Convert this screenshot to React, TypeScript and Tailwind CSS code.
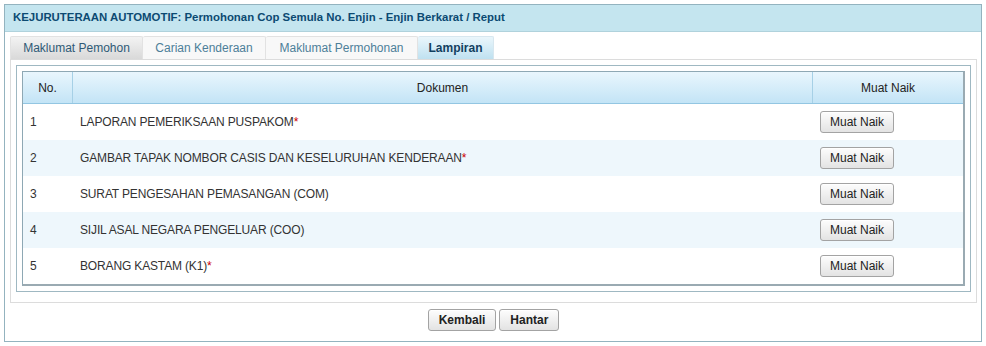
import React from "react";

const rows = [
  { no: "1", doc: "LAPORAN PEMERIKSAAN PUSPAKOM", req: true },
  { no: "2", doc: "GAMBAR TAPAK NOMBOR CASIS DAN KESELURUHAN KENDERAAN", req: true },
  { no: "3", doc: "SURAT PENGESAHAN PEMASANGAN (COM)", req: false },
  { no: "4", doc: "SIJIL ASAL NEGARA PENGELUAR (COO)", req: false },
  { no: "5", doc: "BORANG KASTAM (K1)", req: true },
];

function SmallButton({ children, bold }: { children: React.ReactNode; bold?: boolean }) {
  return (
    <button
      className={
        "h-[22px] rounded-[3px] border border-[#a3a3a3] bg-gradient-to-b from-[#fdfdfd] to-[#e3e3e3] text-[12px] leading-none text-[#222] shadow-[inset_0_1px_0_#fff] " +
        (bold ? "font-bold px-[10px]" : "px-[9px]")
      }
    >
      {children}
    </button>
  );
}

export default function App() {
  return (
    <div
      className="w-[986px] h-[346px] bg-white p-[4px] text-[12px] text-[#333]"
      style={{ fontFamily: '"Liberation Sans", Arial, sans-serif' }}
    >
      <div className="w-[978px] h-[338px] border border-[#93b3bf] flex flex-col">
        <div className="h-[27px] bg-[#c4e5ef] border-b border-[#b0d2dc] flex items-center pl-[8px] font-bold text-[11.4px] text-[#0c4a72]">
          KEJURUTERAAN AUTOMOTIF: Permohonan Cop Semula No. Enjin - Enjin Berkarat / Reput
        </div>
        <div className="pl-[5px] pr-[4px] pt-[4px]">
          <div className="flex h-[23px] items-end">
            <div className="h-[23px] w-[133px] flex items-center justify-center border border-b-0 border-[#e2e2e2] bg-gradient-to-b from-[#f3f3f3] to-[#d9d9d9] text-[#2f5a76] rounded-t-[2px]">
              Maklumat Pemohon
            </div>
            <div className="h-[23px] w-[123px] flex items-center justify-center border border-b-0 border-l-0 border-[#e2e2e2] bg-[#f8f8f8] text-[#4d7f99] rounded-t-[2px]">
              Carian Kenderaan
            </div>
            <div className="h-[23px] w-[152px] flex items-center justify-center border border-b-0 border-l-0 border-[#e2e2e2] bg-[#f8f8f8] text-[#4d7f99] rounded-t-[2px]">
              Maklumat Permohonan
            </div>
            <div className="h-[23px] w-[76px] flex items-center justify-center border border-b-0 border-l-0 border-[#d7e7ef] bg-gradient-to-b from-[#eaf6fb] to-[#bfe1f0] font-bold text-[#12405f] rounded-t-[2px]">
              Lampiran
            </div>
          </div>
          <div className="border border-[#dcdcdc] h-[244px] px-[5px] pt-[5px]">
            <div className="border border-[#9fb8c2] p-[5px]">
              <div className="border border-[#8ea8b4] border-r-2 border-b-2 border-r-[#9aaab2] border-b-[#9aaab2]">
                <div className="flex h-[32px] bg-gradient-to-b from-[#e9f6fd] to-[#c3e4f6] border-b border-[#93c6e2] text-[#222]">
                  <div className="w-[50px] flex items-center justify-center border-r border-[#a6d0e6]">No.</div>
                  <div className="w-[740px] flex items-center justify-center border-r border-[#a6d0e6]">Dokumen</div>
                  <div className="flex-1 flex items-center justify-center">Muat Naik</div>
                </div>
                {rows.map((r, i) => (
                  <div
                    key={r.no}
                    className={"flex h-[36px] items-center " + (i % 2 === 1 ? "bg-[#eef7fc]" : "bg-white")}
                  >
                    <div className="w-[50px] pl-[7px]">{r.no}</div>
                    <div className="w-[740px] pl-[7px] tracking-[-0.15px]">
                      {r.doc}
                      {r.req && <span className="text-[#cc0000]">*</span>}
                    </div>
                    <div className="flex-1 pl-[7px] flex items-center">
                      <SmallButton>Muat Naik</SmallButton>
                    </div>
                  </div>
                ))}
              </div>
            </div>
          </div>
          <div className="flex justify-center gap-[3px] pt-[6px]">
            <SmallButton bold>Kembali</SmallButton>
            <SmallButton bold>Hantar</SmallButton>
          </div>
        </div>
      </div>
    </div>
  );
}
